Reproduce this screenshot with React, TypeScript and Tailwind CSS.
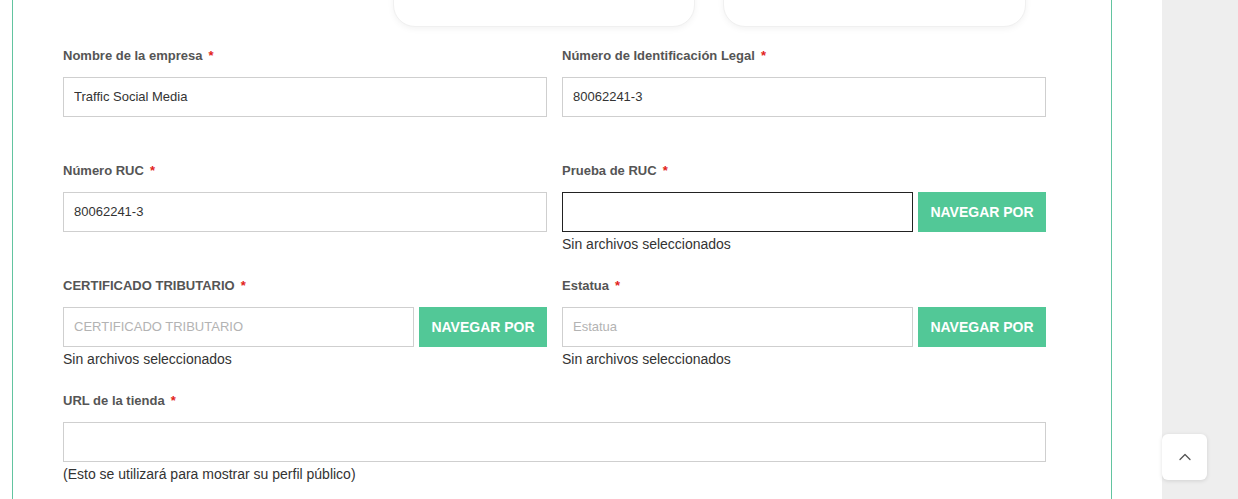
import React from "react";

type Field = {
  label: string;
  value?: string;
  placeholder?: string;
  file?: boolean;
  focused?: boolean;
  helper?: string;
};

const rows: Field[][] = [
  [
    { label: "Nombre de la empresa", value: "Traffic Social Media" },
    { label: "Número de Identificación Legal", value: "80062241-3" },
  ],
  [
    { label: "Número RUC", value: "80062241-3" },
    { label: "Prueba de RUC", file: true, focused: true, helper: "Sin archivos seleccionados" },
  ],
  [
    {
      label: "CERTIFICADO TRIBUTARIO",
      placeholder: "CERTIFICADO TRIBUTARIO",
      file: true,
      helper: "Sin archivos seleccionados",
    },
    { label: "Estatua", placeholder: "Estatua", file: true, helper: "Sin archivos seleccionados" },
  ],
];

function FieldBlock({ field }: { field: Field }) {
  return (
    <div className="flex flex-col">
      <label className="h-5 pt-px text-[13px] font-bold leading-5 text-[#555]">
        {field.label}
        <span className="ml-[6px] text-[#e2231a]">*</span>
      </label>
      <div className="mt-3 flex gap-[5px]">
        <input
          readOnly
          defaultValue={field.value}
          placeholder={field.placeholder}
          className={`h-10 min-w-0 flex-1 bg-white pb-px pl-[10px] pr-[11px] text-[13px] text-[#333] outline-none placeholder:text-[#b3b3b3] ${
            field.focused ? "border border-[#222]" : "border border-[#cfcfcf]"
          }`}
        />
        {field.file && (
          <button className="h-10 w-[128px] shrink-0 bg-[#52c897] text-[14px] font-bold text-white">
            NAVEGAR POR
          </button>
        )}
      </div>
      <div className="mt-0.5 h-5 text-[14px] leading-5 text-[#333]">{field.helper}</div>
    </div>
  );
}

export default function App() {
  return (
    <div className="relative flex h-[499px] overflow-hidden bg-[#eeeeee] font-['Liberation_Sans',Arial,sans-serif]">
      <div className="h-full w-[1162px] shrink-0 bg-white pl-3 pr-[50px]">
        <div className="flow-root h-full border-x border-[#62c4a0] pl-[50px] pr-[65px]">
          {/* option cards, cut by the top edge */}
          <div className="-mt-[33px] flex gap-7 pl-[330px]">
            <div className="h-[60px] w-[302px] rounded-[22px] border border-[#f0f0f0] bg-white shadow-[0_2px_6px_rgba(0,0,0,0.05)]" />
            <div className="h-[60px] w-[303px] rounded-[22px] border border-[#f0f0f0] bg-white shadow-[0_2px_6px_rgba(0,0,0,0.05)]" />
          </div>

          <div className="mt-[18px]">
            {rows.map((row, i) => (
              <div key={i} className="mb-[21px] grid grid-cols-2 gap-[15px]">
                {row.map((f) => (
                  <FieldBlock key={f.label} field={f} />
                ))}
              </div>
            ))}

            <div className="flex flex-col">
              <label className="h-5 pt-px text-[13px] font-bold leading-5 text-[#555]">
                URL de la tienda
                <span className="ml-[6px] text-[#e2231a]">*</span>
              </label>
              <input
                readOnly
                className="mt-3 h-10 border border-[#cfcfcf] bg-white px-[11px] text-[13px] outline-none"
              />
              <div className="mt-0.5 h-5 text-[14px] leading-5 text-[#333]">
                (Esto se utilizará para mostrar su perfil público)
              </div>
            </div>
          </div>
        </div>
      </div>

      <button className="absolute left-[1162px] top-[434px] flex h-[46px] w-[45px] items-center justify-center rounded-md bg-white shadow-[0_1px_4px_rgba(0,0,0,0.12)]">
        <svg width="14" height="14" viewBox="0 0 14 14" fill="none">
          <path d="M2 9.5l5-5 5 5" stroke="#555" strokeWidth="1.3" strokeLinecap="round" strokeLinejoin="round" />
        </svg>
      </button>
    </div>
  );
}
